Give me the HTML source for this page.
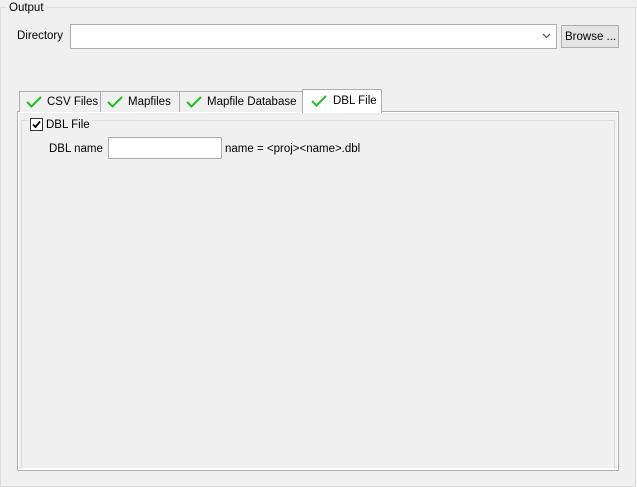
<!DOCTYPE html>
<html><head><style>
*{margin:0;padding:0;box-sizing:border-box}
body{width:637px;height:487px;background:#f0f0f0;font-family:"Liberation Sans",sans-serif;font-size:11.5px;color:#000;position:relative;overflow:hidden}
.a{position:absolute}
.t{position:absolute;white-space:nowrap;line-height:14px}
.tab{position:absolute;top:91px;height:21px;border:1px solid #adadad;border-bottom:none;background:#f0f0f0}
.tab span{position:absolute;top:3px;white-space:nowrap;line-height:14px}
.tab svg{position:absolute;left:6px;top:4px}
</style></head><body>
<div class="a" style="left:0;top:7px;width:636px;height:480px;border:1px solid #dcdcdc"></div>
<div class="t" style="left:7px;top:1px;background:#f0f0f0;padding:0 2px">Output</div>
<div class="t" style="left:17px;top:29px">Directory</div>
<div class="a" style="left:70px;top:24px;width:487px;height:25px;background:#fff;border:1px solid #acacac"></div>
<svg class="a" style="left:542px;top:33px" width="9" height="6"><path d="M1 1L4.5 4.5L8 1" stroke="#606060" stroke-width="1.3" fill="none"/></svg>
<div class="a" style="left:561px;top:25px;width:58px;height:23px;background:#e5e5e5;border:1px solid #adadad"></div>
<div class="t" style="left:565px;top:30px">Browse ...</div>

<div class="a" style="left:17px;top:111px;width:602px;height:360px;border:1px solid #adadad;background:#f0f0f0;box-shadow:inset 1px 1px 0 #fff, inset -1px -1px 0 #fff"></div>
<div class="a" style="left:21px;top:120px;width:594px;height:349px;border:1px solid #dcdcdc;border-bottom-color:#fff"></div>

<div class="tab" style="left:19px;width:82px"><svg width="16" height="12"><path d="M1 6L5.5 10.5L15 1" stroke="#1fbf1f" stroke-width="2" fill="none"/></svg><span style="left:27px">CSV Files</span></div>
<div class="tab" style="left:100px;width:80px"><svg width="16" height="12"><path d="M1 6L5.5 10.5L15 1" stroke="#1fbf1f" stroke-width="2" fill="none"/></svg><span style="left:27px">Mapfiles</span></div>
<div class="tab" style="left:179px;width:124px"><svg width="16" height="12"><path d="M1 6L5.5 10.5L15 1" stroke="#1fbf1f" stroke-width="2" fill="none"/></svg><span style="left:27px">Mapfile Database</span></div>
<div class="tab" style="left:302px;top:89px;width:80px;height:24px;background:#fff"><svg width="16" height="12" style="top:5px;left:8px"><path d="M1 6L5.5 10.5L15 1" stroke="#1fbf1f" stroke-width="2" fill="none"/></svg><span style="left:30px;top:4px">DBL File</span></div>

<div class="t" style="left:28px;top:117px;background:#f0f0f0;width:64px;height:14px"></div>
<div class="a" style="left:30px;top:118px;width:13px;height:13px;background:#fff;border:1px solid #333"></div>
<svg class="a" style="left:31px;top:119px" width="11" height="11"><path d="M2 5.5L4.5 8L9 2.5" stroke="#000" stroke-width="1.8" fill="none"/></svg>
<div class="t" style="left:46px;top:118px">DBL File</div>
<div class="t" style="left:49px;top:142px">DBL name</div>
<div class="a" style="left:108px;top:137px;width:114px;height:22px;background:#fff;border:1px solid #acacac"></div>
<div class="t" style="left:225px;top:142px">name = &lt;proj&gt;&lt;name&gt;.dbl</div>
</body></html>
